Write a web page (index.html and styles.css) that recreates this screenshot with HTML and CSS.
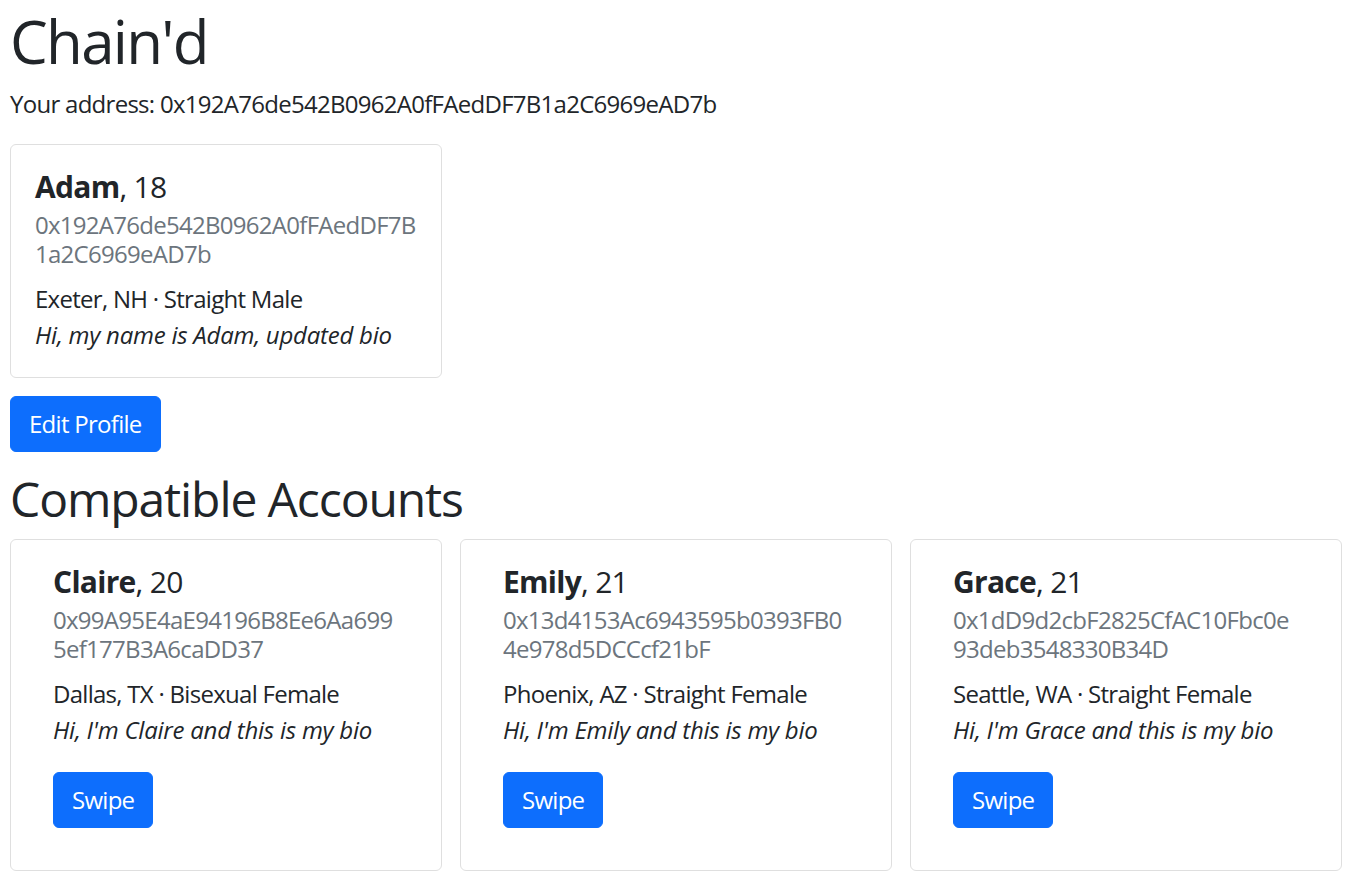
FILE: index.html
```html
<!DOCTYPE html>
<html lang="en">
<head>
<meta charset="utf-8">
<title>Chain'd</title>
<link rel="stylesheet" href="styles.css">
</head>
<body>
<main class="page">
  <h1 class="title">Chain'd</h1>
  <p class="address">Your address: 0x192A76de542B0962A0fFAedDF7B1a2C6969eAD7b</p>

  <div class="grid">
    <div class="card">
      <div class="card-body">
        <h5 class="card-title"><strong>Adam</strong>, 18</h5>
        <h6 class="card-subtitle">0x192A76de542B0962A0fFAedDF7B1a2C6969eAD7b</h6>
        <p class="card-text">Exeter, NH · Straight Male</p>
        <p class="card-text bio last">Hi, my name is Adam, updated bio</p>
      </div>
    </div>
  </div>

  <button class="btn edit">Edit Profile</button>

  <h2 class="section">Compatible Accounts</h2>

  <div class="grid">
    <div class="card">
      <div class="card-body wide">
        <h5 class="card-title"><strong>Claire</strong>, 20</h5>
        <h6 class="card-subtitle">0x99A95E4aE94196B8Ee6Aa6995ef177B3A6caDD37</h6>
        <p class="card-text">Dallas, TX · Bisexual Female</p>
        <p class="card-text bio">Hi, I'm Claire and this is my bio</p>
        <button class="btn">Swipe</button>
      </div>
    </div>
    <div class="card">
      <div class="card-body wide">
        <h5 class="card-title"><strong>Emily</strong>, 21</h5>
        <h6 class="card-subtitle">0x13d4153Ac6943595b0393FB04e978d5DCCcf21bF</h6>
        <p class="card-text">Phoenix, AZ · Straight Female</p>
        <p class="card-text bio">Hi, I'm Emily and this is my bio</p>
        <button class="btn">Swipe</button>
      </div>
    </div>
    <div class="card">
      <div class="card-body wide">
        <h5 class="card-title"><strong>Grace</strong>, 21</h5>
        <h6 class="card-subtitle">0x1dD9d2cbF2825CfAC10Fbc0e93deb3548330B34D</h6>
        <p class="card-text">Seattle, WA · Straight Female</p>
        <p class="card-text bio">Hi, I'm Grace and this is my bio</p>
        <button class="btn">Swipe</button>
      </div>
    </div>
  </div>
</main>
</body>
</html>
```
FILE: styles.css
```css
* { box-sizing: border-box; }

html, body {
  margin: 0;
  background: #fff;
}

body {
  font-family: "Open Sans", "Noto Sans", sans-serif;
  font-size: 24px;
  line-height: 36px;
  color: #212529;
  letter-spacing: -0.72px;
}

.page {
  padding: 0 9px 0 10px;
}

.title {
  margin: 5px 0 9px;
  font-size: 60px;
  line-height: 72px;
  font-weight: 400;
  letter-spacing: -1.7px;
}

.address {
  margin: 0 0 22px;
}

.grid {
  display: grid;
  grid-template-columns: repeat(3, 1fr);
  gap: 18px;
}

.card {
  background: #fff;
  border: 1px solid #dfdfdf;
  border-radius: 6px;
}

.card-body {
  padding: 24px;
}

.card-body.wide {
  padding: 24px 42px 42px;
}

.card-title {
  margin: 0 0 6px;
  font-size: 30px;
  line-height: 36px;
  font-weight: 400;
}

.card-title strong {
  font-weight: 700;
}

.card-subtitle {
  margin: 0 0 12px;
  font-size: 24px;
  line-height: 28.8px;
  font-weight: 400;
  color: #6c757d;
  word-break: break-all;
}

.card-text {
  margin: 0;
}

.bio {
  font-style: italic;
  letter-spacing: -0.24px;
  margin-bottom: 24px;
}

.bio.last {
  margin-bottom: 0;
}

.btn {
  display: inline-block;
  font-family: inherit;
  font-size: 24px;
  line-height: 36px;
  letter-spacing: -0.72px;
  padding: 9px 18px;
  color: #fff;
  background: #0d6efd;
  border: 1px solid #0d6efd;
  border-radius: 6px;
  cursor: pointer;
}

.edit {
  margin: 18px 0 18px;
}

.section {
  margin: 0 0 12px;
  font-size: 48px;
  line-height: 57.6px;
  font-weight: 400;
  letter-spacing: -1.1px;
}
```
